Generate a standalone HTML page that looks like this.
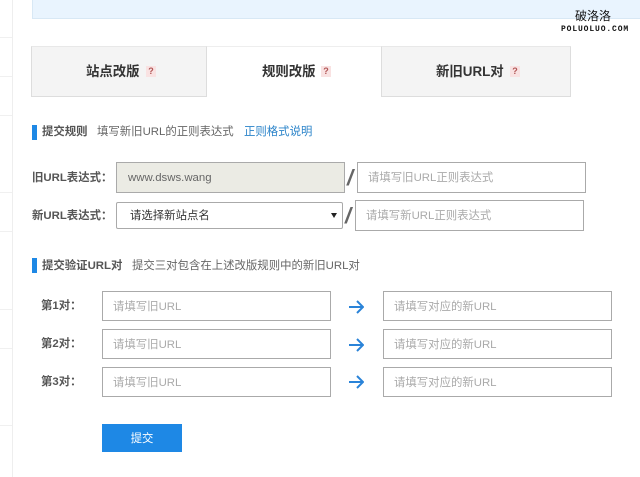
<!DOCTYPE html>
<html><head><meta charset="utf-8"><style>
html,body{margin:0;padding:0;background:#fff}
body{width:640px;height:477px;overflow:hidden;position:relative;font-family:"Liberation Sans","Noto Sans CJK SC",sans-serif;font-size:11.4px;color:#555}
#soft{position:absolute;left:0;top:0;width:640px;height:477px;filter:blur(.3px)}
.a{position:absolute;box-sizing:border-box;white-space:nowrap}
.tab{background:#f4f4f4;border:1px solid #ddd;border-top-color:#e8e8e8;height:51px;top:46px}
.tt{font-size:13.4px;font-weight:bold;color:#333;top:62px;line-height:20px}
.q{width:10px;height:11px;top:66px;background:#f9e2e2;color:#b05555;font-size:9px;font-weight:bold;line-height:11px;text-align:center}
.inp{border:1px solid #aaa;background:#fff;color:#aaa;line-height:30px;padding-left:10px;height:30px}
.lb{font-weight:bold;color:#555;line-height:18px}
.h{font-weight:bold;color:#555;line-height:18px}
.bar{width:5px;height:15px;background:#1e88e5;left:32px}
.sl{font-size:22px;font-style:italic;color:#666;line-height:24px;font-weight:bold}
</style></head><body>
<div id="soft">
<div class="a" style="left:12px;top:0;width:1px;height:477px;background:#eee"></div>
<div class="a" style="left:0;top:37px;width:12px;height:1px;background:#f0f0f0"></div>
<div class="a" style="left:0;top:76px;width:12px;height:1px;background:#f0f0f0"></div>
<div class="a" style="left:0;top:115px;width:12px;height:1px;background:#f0f0f0"></div>
<div class="a" style="left:0;top:192px;width:12px;height:1px;background:#f0f0f0"></div>
<div class="a" style="left:0;top:231px;width:12px;height:1px;background:#f0f0f0"></div>
<div class="a" style="left:0;top:309px;width:12px;height:1px;background:#f0f0f0"></div>
<div class="a" style="left:0;top:348px;width:12px;height:1px;background:#f0f0f0"></div>
<div class="a" style="left:0;top:425px;width:12px;height:1px;background:#f0f0f0"></div>

<div class="a" style="left:32px;top:-1px;width:608px;height:20px;background:#e9f4fe;border:1px solid #d8e8f5;border-right:0"></div>

<div class="a tab" style="left:31px;width:176px"></div>
<div class="a" style="left:207px;top:46px;width:175px;height:1px;background:#eee"></div>
<div class="a tab" style="left:381px;width:190px"></div>
<div class="a tt" style="left:86px">站点改版</div><div class="a q" style="left:146px">?</div>
<div class="a tt" style="left:262px">规则改版</div><div class="a q" style="left:321px">?</div>
<div class="a tt" style="left:436px">新旧URL对</div><div class="a q" style="left:510px">?</div>

<div class="a bar" style="top:125px"></div>
<div class="a h" style="left:42px;top:123px">提交规则</div>
<div class="a" style="left:97px;top:123px;line-height:18px;color:#666">填写新旧URL的正则表达式</div>
<div class="a" style="left:244px;top:123px;line-height:18px;color:#2a83c9">正则格式说明</div>

<div class="a lb" style="left:32px;top:169px">旧URL表达式：</div>
<div class="a" style="left:116px;top:162px;width:229px;height:31px;background:#ebebe4;border:1px solid #aaa;color:#666;line-height:31px;padding-left:11px">www.dsws.wang</div>
<div class="a sl" style="left:347px;top:166px">/</div>
<div class="a inp" style="left:357px;top:162px;width:229px;height:31px;line-height:31px">请填写旧URL正则表达式</div>

<div class="a lb" style="left:32px;top:207px">新URL表达式：</div>
<div class="a" style="left:116px;top:202px;width:227px;height:27px;background:#fff;border:1px solid #aaa;border-radius:2px;color:#333;line-height:27px;padding-left:13px">请选择新站点名</div>
<div class="a" style="left:331px;top:213px;width:0;height:0;border-left:3px solid transparent;border-right:3px solid transparent;border-top:5px solid #222"></div>
<div class="a sl" style="left:345px;top:204px">/</div>
<div class="a inp" style="left:355px;top:200px;width:229px;height:31px;line-height:31px">请填写新URL正则表达式</div>

<div class="a bar" style="top:258px"></div>
<div class="a h" style="left:42px;top:257px">提交验证URL对</div>
<div class="a" style="left:132px;top:257px;line-height:18px;color:#666">提交三对包含在上述改版规则中的新旧URL对</div>

<div class="a lb" style="left:41px;top:297px">第1对：</div>
<div class="a inp" style="left:102px;top:291px;width:229px">请填写旧URL</div>
<svg class="a" style="left:349px;top:300px" width="15" height="14" viewBox="0 0 15 14" fill="none" stroke="#2a83d8" stroke-width="2"><path d="M0 7H14M8 1L14 7L8 13"/></svg>
<div class="a inp" style="left:383px;top:291px;width:229px">请填写对应的新URL</div>

<div class="a lb" style="left:41px;top:335px">第2对：</div>
<div class="a inp" style="left:102px;top:329px;width:229px">请填写旧URL</div>
<svg class="a" style="left:349px;top:338px" width="15" height="14" viewBox="0 0 15 14" fill="none" stroke="#2a83d8" stroke-width="2"><path d="M0 7H14M8 1L14 7L8 13"/></svg>
<div class="a inp" style="left:383px;top:329px;width:229px">请填写对应的新URL</div>

<div class="a lb" style="left:41px;top:373px">第3对：</div>
<div class="a inp" style="left:102px;top:367px;width:229px">请填写旧URL</div>
<svg class="a" style="left:349px;top:375px" width="15" height="14" viewBox="0 0 15 14" fill="none" stroke="#2a83d8" stroke-width="2"><path d="M0 7H14M8 1L14 7L8 13"/></svg>
<div class="a inp" style="left:383px;top:367px;width:229px">请填写对应的新URL</div>

<div class="a" style="left:102px;top:424px;width:80px;height:28px;background:#1e88e5;color:#fff;text-align:center;line-height:30px">提交</div>
</div>
<div class="a" style="left:575px;top:9px;font-size:12px;color:#111;line-height:14px">破洛洛</div>
<div class="a" style="left:561px;top:25px;font-size:8px;letter-spacing:.87px;color:#111;line-height:10px;font-family:'Liberation Mono',monospace;font-weight:bold">POLUOLUO.COM</div>
</body></html>
